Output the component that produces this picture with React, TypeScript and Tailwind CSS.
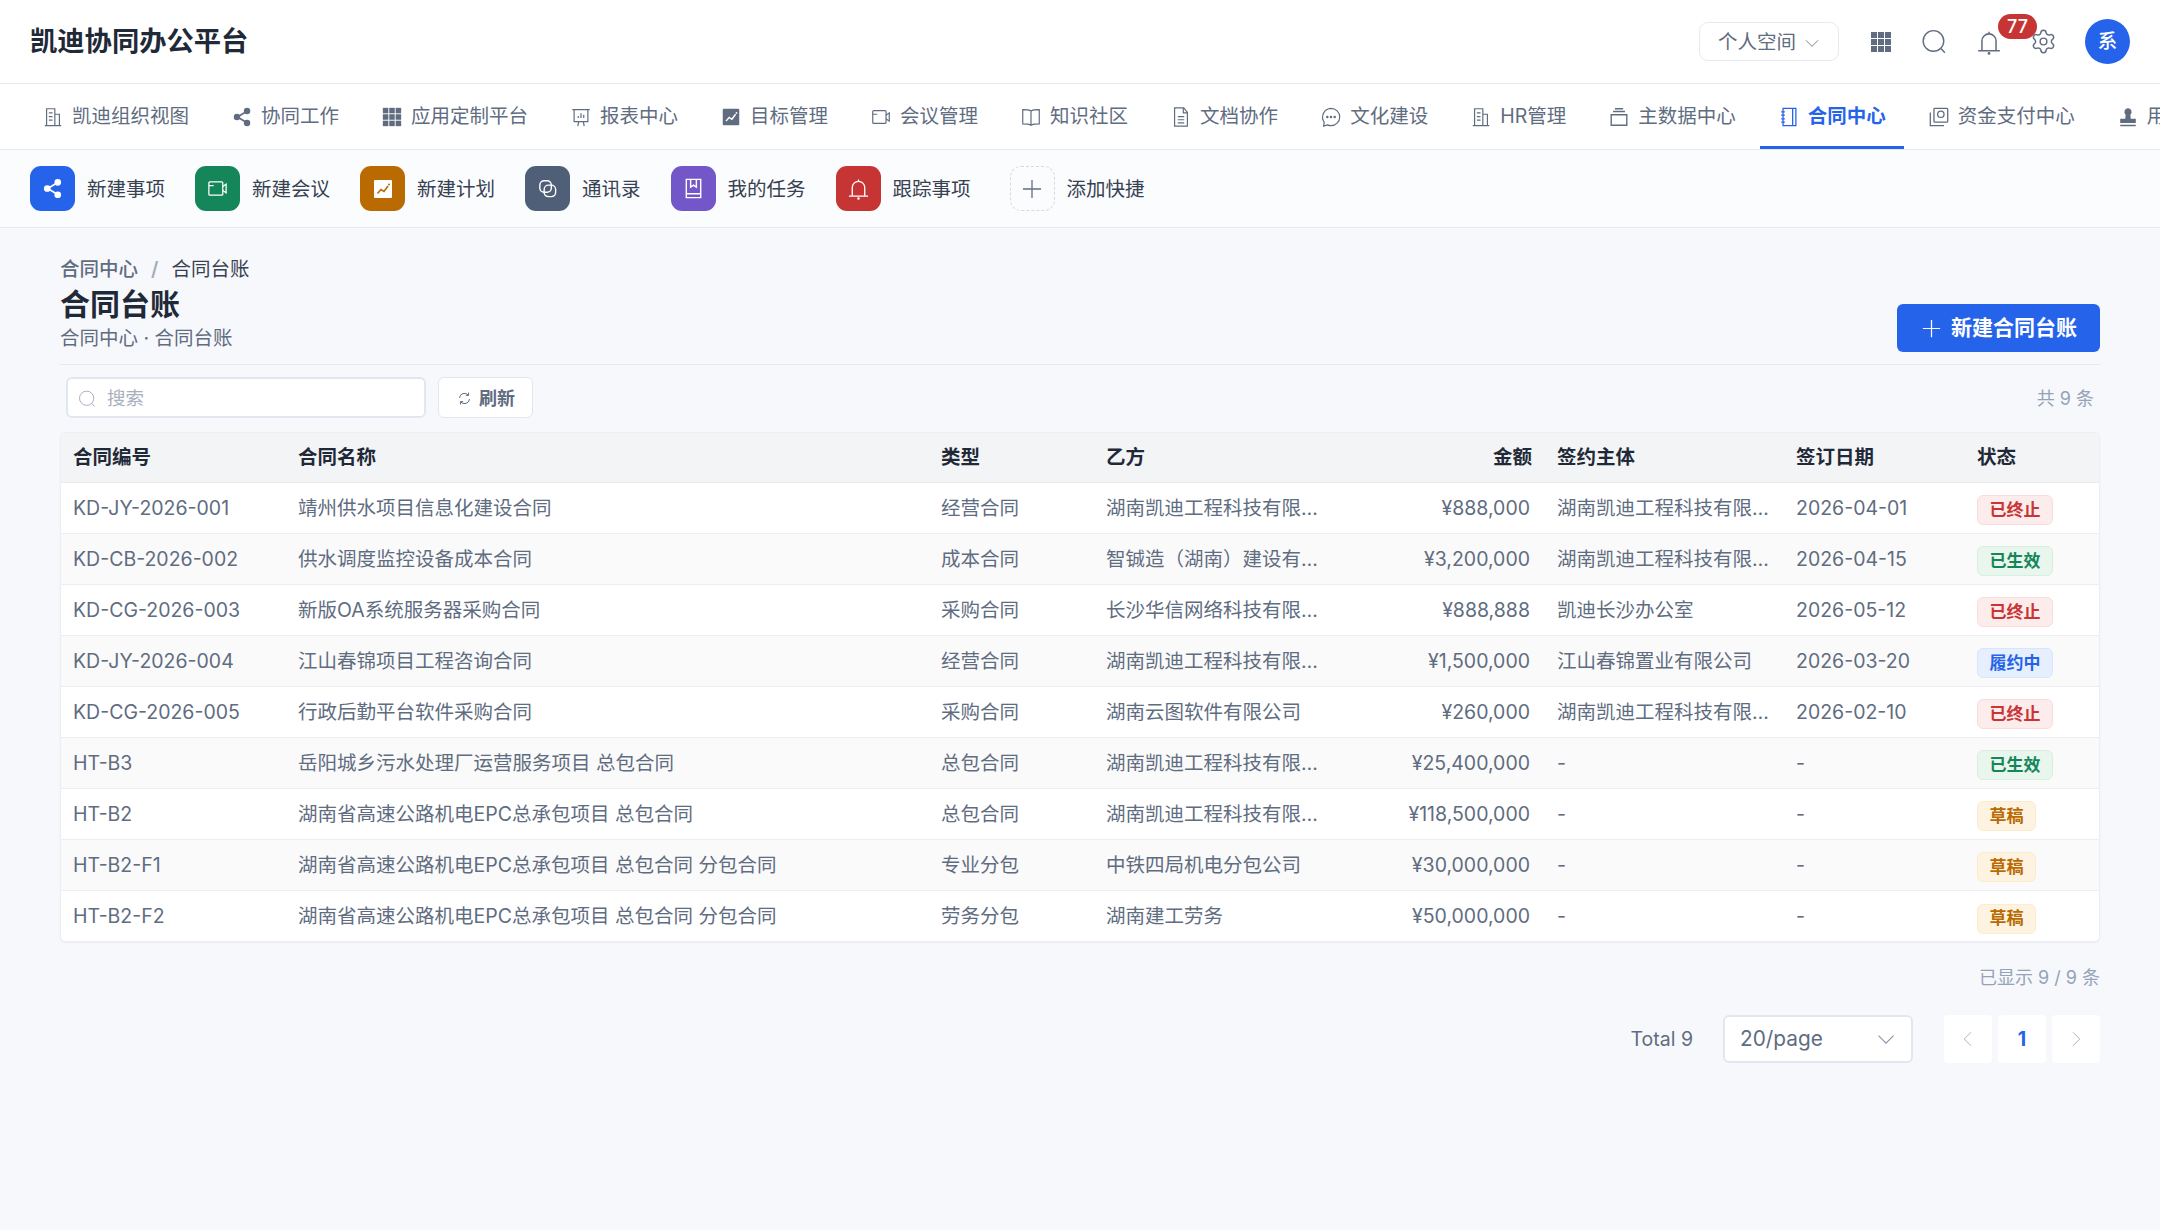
import React from 'react'
import { Settings } from 'lucide-react'

const Svg: React.FC<{ className?: string; sw?: number; children: React.ReactNode }> = ({ className, sw = 1.3, children }) => (
  <svg viewBox="0 0 24 24" fill="none" stroke="currentColor" strokeWidth={sw} className={className}>
    {children}
  </svg>
)

const icons: Record<string, (c: string, inner?: string) => React.ReactNode> = {
  building: (c) => <Svg className={c}><path d="M3 21.5h18M5 21.5V3h9v18.5M14 9h5v12.5M7.500 7.500h4M7.500 11.500h4M7.500 15.500h4" /></Svg>,
  share: (c) => <Svg className={c} sw={1.8}><path d="M17 6 7 12l10 6" /><circle cx="17.500" cy="5.500" r="2.600" fill="currentColor" /><circle cx="6.500" cy="12" r="2.600" fill="currentColor" /><circle cx="17.500" cy="18.500" r="2.600" fill="currentColor" /></Svg>,
  grid: (c) => (
    <svg viewBox="0 0 24 24" fill="currentColor" className={c}>
      <rect x="2" y="2" width="6" height="6" /><rect x="9" y="2" width="6" height="6" /><rect x="16" y="2" width="6" height="6" />
      <rect x="2" y="9" width="6" height="6" /><rect x="9" y="9" width="6" height="6" /><rect x="16" y="9" width="6" height="6" />
      <rect x="2" y="16" width="6" height="6" /><rect x="9" y="16" width="6" height="6" /><rect x="16" y="16" width="6" height="6" />
    </svg>
  ),
  board: (c) => <Svg className={c}><path d="M2.500 4h19M4.500 4v13h15V4M9.500 17l-1 5M14.500 17l1 5M9 13v-2M12 13V8M15 13v-3.500" /></Svg>,
  trend: (c, inner = '#ffffff') => (
    <svg viewBox="0 0 24 24" className={c}>
      <rect x="3" y="3" width="18" height="18" rx="1" fill="currentColor" />
      <path d="M6.500 16.500 10 12.500l3 2 4-5.500" fill="none" stroke={inner} strokeWidth="1.6" />
      <circle cx="18" cy="7.500" r="1" fill={inner} />
    </svg>
  ),
  video: (c) => <Svg className={c}><rect x="3" y="5" width="14.500" height="14" rx="1" /><path d="M3 9h5M17.500 10 21 7.500v9L17.500 14" /></Svg>,
  book: (c) => <Svg className={c}><path d="M12 5.500C10 4.200 6 4 3 4v15.500c3 0 7 .2 9 1.500 2-1.300 6-1.500 9-1.500V4c-3 0-7 .2-9 1.500zM12 5.500V21" /></Svg>,
  doc: (c) => <Svg className={c}><path d="M5 2h10l4 5v15H5zM14.500 2v5.500H19M8.500 11.500h7M8.500 15h7M8.500 18.500h7" /></Svg>,
  chat: (c) => (
    <Svg className={c}>
      <path d="M12 2.500a9.500 9.500 0 0 1 0 19c-1.500 0-2.800-.3-4-.9L4 22l.6-4.500A9.500 9.500 0 0 1 12 2.500z" />
      <circle cx="8" cy="12" r=".7" fill="currentColor" /><circle cx="12" cy="12" r=".7" fill="currentColor" /><circle cx="16" cy="12" r=".7" fill="currentColor" />
    </Svg>
  ),
  box: (c) => <Svg className={c} sw={1.5}><path d="M3.500 9.500h17V21h-17zM5.500 6h13M7.500 3h9" /></Svg>,
  notebook: (c) => <Svg className={c} sw={1.4}><path d="M5.500 2.500h14v19h-14zM16 2.500v19M3.500 6.500h4M3.500 10h4M3.500 14h4M3.500 17.500h4" /></Svg>,
  postcard: (c) => <Svg className={c} sw={1.4}><rect x="6.500" y="2.500" width="15" height="15" rx="1" /><circle cx="14" cy="9" r="3.500" /><path d="M2.500 7v14.500h15" /></Svg>,
  stamp: (c) => (
    <svg viewBox="0 0 24 24" fill="currentColor" className={c}>
      <path d="M12 2.500a4 4 0 0 1 2.600 7L15 14h5.500v4.500h-17V14H9l.4-4.500a4 4 0 0 1 2.600-7zM3.500 20.500h17V22h-17z" />
    </svg>
  ),
  search: (c) => <Svg className={c} sw={1.3}><circle cx="11.500" cy="11" r="9.500" /><path d="m18.500 18 3.500 4" /></Svg>,
  bell: (c) => <Svg className={c} sw={1.4}><path d="M2 20h20M5.500 20v-9a6.500 6.500 0 0 1 13 0v9M12 2.500v2" /><circle cx="12" cy="22.500" r=".6" fill="currentColor" /></Svg>,
  copy: (c) => <Svg className={c} sw={1.5}><rect x="4" y="4" width="12" height="12" rx="4.500" /><rect x="8.500" y="8.500" width="12" height="12" rx="4.500" /></Svg>,
  task: (c) => <Svg className={c} sw={1.5}><path d="M4.500 2.500h15v19h-15zM4.500 17.500h15M9 2.500v8l3-2 3 2v-8" /></Svg>,
  plus: (c) => <Svg className={c} sw={1.3}><path d="M12 3v18M3 12h18" /></Svg>,
  down: (c) => <Svg className={c} sw={1.3}><path d="m3 8 9 9 9-9" /></Svg>,
  left: (c) => <Svg className={c} sw={1.2}><path d="m16 3-9 9 9 9" /></Svg>,
  right: (c) => <Svg className={c} sw={1.2}><path d="m8 3 9 9-9 9" /></Svg>,
  refresh: (c) => <Svg className={c} sw={1.6}><path d="M4 11a8 8 0 0 1 14-4.500M20 13a8 8 0 0 1-14 4.500" /><path d="M18.500 2.500v4.500H14M5.500 21.500V17H10" /></Svg>,
}

const navItems = [
  { label: '凯迪组织视图', icon: 'building' },
  { label: '协同工作', icon: 'share' },
  { label: '应用定制平台', icon: 'grid' },
  { label: '报表中心', icon: 'board' },
  { label: '目标管理', icon: 'trend' },
  { label: '会议管理', icon: 'video' },
  { label: '知识社区', icon: 'book' },
  { label: '文档协作', icon: 'doc' },
  { label: '文化建设', icon: 'chat' },
  { label: 'HR管理', icon: 'building' },
  { label: '主数据中心', icon: 'box' },
  { label: '合同中心', icon: 'notebook', active: true },
  { label: '资金支付中心', icon: 'postcard' },
  { label: '用户中心', icon: 'stamp' },
]

const shortcuts = [
  { label: '新建事项', icon: 'share', bg: 'bg-[#2563eb]' },
  { label: '新建会议', icon: 'video', bg: 'bg-[#15865a]' },
  { label: '新建计划', icon: 'trend', bg: 'bg-[#b96a00]' },
  { label: '通讯录', icon: 'copy', bg: 'bg-[#4f5f78]' },
  { label: '我的任务', icon: 'task', bg: 'bg-[#7356c8]' },
  { label: '跟踪事项', icon: 'bell', bg: 'bg-[#c73434]' },
]

const CO = '湖南凯迪工程科技有限公司'

const rows = [
  ['KD-JY-2026-001', '靖州供水项目信息化建设合同', '经营合同', CO, '¥888,000', CO, '2026-04-01', '已终止'],
  ['KD-CB-2026-002', '供水调度监控设备成本合同', '成本合同', '智铖造（湖南）建设有限公司', '¥3,200,000', CO, '2026-04-15', '已生效'],
  ['KD-CG-2026-003', '新版OA系统服务器采购合同', '采购合同', '长沙华信网络科技有限公司', '¥888,888', '凯迪长沙办公室', '2026-05-12', '已终止'],
  ['KD-JY-2026-004', '江山春锦项目工程咨询合同', '经营合同', CO, '¥1,500,000', '江山春锦置业有限公司', '2026-03-20', '履约中'],
  ['KD-CG-2026-005', '行政后勤平台软件采购合同', '采购合同', '湖南云图软件有限公司', '¥260,000', CO, '2026-02-10', '已终止'],
  ['HT-B3', '岳阳城乡污水处理厂运营服务项目 总包合同', '总包合同', CO, '¥25,400,000', '-', '-', '已生效'],
  ['HT-B2', '湖南省高速公路机电EPC总承包项目 总包合同', '总包合同', CO, '¥118,500,000', '-', '-', '草稿'],
  ['HT-B2-F1', '湖南省高速公路机电EPC总承包项目 总包合同 分包合同', '专业分包', '中铁四局机电分包公司', '¥30,000,000', '-', '-', '草稿'],
  ['HT-B2-F2', '湖南省高速公路机电EPC总承包项目 总包合同 分包合同', '劳务分包', '湖南建工劳务', '¥50,000,000', '-', '-', '草稿'],
]

const badgeStyles: Record<string, string> = {
  已终止: 'bg-[#fdecec] border-[#fbdcdc] text-[#c93434]',
  已生效: 'bg-[#e8f6ee] border-[#d7efe1] text-[#15865a]',
  履约中: 'bg-[#e6effe] border-[#d8e5fd] text-[#2563eb]',
  草稿: 'bg-[#fdf3e0] border-[#fbebcf] text-[#b96a00]',
}

const Badge: React.FC<{ text: string }> = ({ text }) => (
  <span className={`inline-flex h-[30px] items-center rounded-[6px] border px-[11.5px] text-[17px] font-semibold ${badgeStyles[text]}`}>
    {text}
  </span>
)

const Header: React.FC = () => (
  <header className="flex h-[84px] items-center justify-between border-b border-[#e8eaee] bg-white pl-[30px] pr-[30px]">
    <h1 className="pt-[2px] text-[27.3px] font-semibold text-[#1f2937]">凯迪协同办公平台</h1>
    <div className="flex items-center">
      <button className="flex h-[39px] w-[140px] items-center justify-center gap-[8px] rounded-[9px] border border-[#e8eaf0] pt-[2px] text-[19.5px] text-[#606c80]">
        个人空间
        {icons.down('h-[16px] w-[16px]')}
      </button>
      <div className="ml-[30px] flex items-center text-[#606c80]">
        {icons.grid('h-[24px] w-[24px]')}
        {icons.search('ml-[28px] h-[26px] w-[26px]')}
        <div className="relative ml-[29px]">
          {icons.bell('h-[26px] w-[26px]')}
          <span className="absolute left-[22px] top-[-15px] z-10 flex h-[25px] w-[39px] items-center justify-center rounded-full bg-[#c73434] text-[18px] font-medium text-white">77</span>
        </div>
        <Settings className="ml-[28px] h-[27px] w-[27px]" strokeWidth={1.3} />
      </div>
      <div className="ml-[28px] flex h-[45px] w-[45px] items-center justify-center rounded-full bg-[#2563eb] text-[19.5px] font-medium text-white">系</div>
    </div>
  </header>
)

const Nav: React.FC = () => (
  <nav className="flex h-[66px] items-stretch gap-[6px] overflow-hidden border-b border-[#e8eaee] bg-white pl-[24px]">
    {navItems.map((n) => (
      <a
        key={n.label}
        className={
          n.active
            ? 'flex shrink-0 items-center gap-[8px] border-b-[3px] border-[#2563eb] px-[18px] pt-[3px] text-[19.5px] font-semibold text-[#2563eb]'
            : 'flex shrink-0 items-center gap-[8px] border-b-[3px] border-transparent px-[18px] pt-[3px] text-[19.5px] text-[#606c80]'
        }
      >
        {icons[n.icon]('h-[22px] w-[22px] shrink-0')}
        {n.label}
      </a>
    ))}
  </nav>
)

const Shortcuts: React.FC = () => (
  <div className="flex h-[78px] items-center gap-[30px] border-b border-[#e8eaee] bg-[#fbfcfe] pl-[30px]">
    {shortcuts.map((s) => (
      <div key={s.label} className="flex items-center gap-[12px]">
        <div className={`flex h-[45px] w-[45px] items-center justify-center rounded-[11px] text-white ${s.bg}`}>
          {s.icon === 'trend'
            ? icons.trend('h-[24px] w-[24px]', '#b96a00')
            : icons[s.icon]('h-[23px] w-[23px]')}
        </div>
        <span className="pt-[2px] text-[19.5px] text-[#374151]">{s.label}</span>
      </div>
    ))}
    <div className="ml-[9px] flex items-center gap-[12px]">
      <div className="flex h-[45px] w-[45px] items-center justify-center rounded-[11px] border border-dashed border-[#d5d9e2] text-[#606c80]">
        {icons.plus('h-[24px] w-[24px]')}
      </div>
      <span className="pt-[2px] text-[19.5px] text-[#374151]">添加快捷</span>
    </div>
  </div>
)

const columns = [
  { title: '合同编号', cls: 'w-[225px] pr-[12px] text-left' },
  { title: '合同名称', cls: 'w-[643px] pr-[12px] text-left' },
  { title: '类型', cls: 'w-[165px] pr-[12px] text-left' },
  { title: '乙方', cls: 'w-[238px] pr-[12px] text-left' },
  { title: '金额', cls: 'w-[213px] pr-[13px] text-right' },
  { title: '签约主体', cls: 'w-[239px] pr-[12px] text-left' },
  { title: '签订日期', cls: 'w-[181px] pr-[12px] text-left' },
  { title: '状态', cls: 'pr-[12px] text-left' },
]

const ContractTable: React.FC = () => (
  <div className="mt-[14px] overflow-hidden rounded-[6px] border border-[#eceef3] bg-white shadow-[0_1px_2px_rgba(30,41,59,0.06)]">
    <table className="w-full table-fixed border-collapse text-[19.5px] text-[#606c80]">
      <thead>
        <tr className="h-[49px] border-b border-[#e8eaee] bg-[#f3f4f6]">
          {columns.map((c) => (
            <th key={c.title} className={`pl-[12px] font-semibold text-[#1f2937] ${c.cls}`}>{c.title}</th>
          ))}
        </tr>
      </thead>
      <tbody>
        {rows.map((r, i) => (
          <tr key={r[0]} className={`h-[51px] border-b border-[#eceef1] last:border-b-0 ${i % 2 === 1 ? 'bg-[#fafafa]' : 'bg-white'}`}>
            <td className="truncate px-[12px] pt-[2px]">{r[0]}</td>
            <td className="truncate px-[12px] pt-[2px]">{r[1]}</td>
            <td className="truncate px-[12px] pt-[2px]">{r[2]}</td>
            <td className="truncate px-[12px] pt-[2px]">{r[3]}</td>
            <td className="truncate pl-[12px] pr-[15px] pt-[2px] text-right">{r[4]}</td>
            <td className="truncate px-[12px] pt-[2px]">{r[5]}</td>
            <td className="truncate px-[12px] pt-[2px]">{r[6]}</td>
            <td className="px-[12px] pt-[5px]"><Badge text={r[7]} /></td>
          </tr>
        ))}
      </tbody>
    </table>
  </div>
)

const Pagination: React.FC = () => (
  <div className="mt-[24px] flex items-center justify-end">
    <span className="pt-[2px] text-[19.5px] text-[#606c80]">Total 9</span>
    <div className="ml-[30px] flex h-[48px] w-[190px] items-center justify-between rounded-[6px] border-2 border-[#e2e6ee] bg-white pl-[15px] pr-[15px] text-[20.8px] text-[#606c80]">
      20/page
      {icons.down('h-[20px] w-[20px] text-[#8794a8]')}
    </div>
    <div className="ml-[31px] flex gap-[6px]">
      <div className="flex h-[48px] w-[48px] items-center justify-center rounded-[4px] bg-white text-[#a3adbd]">{icons.left('h-[18px] w-[18px]')}</div>
      <div className="flex h-[48px] w-[48px] items-center justify-center rounded-[4px] bg-white pt-[2px] text-[19.5px] font-bold text-[#2563eb]">1</div>
      <div className="flex h-[48px] w-[48px] items-center justify-center rounded-[4px] bg-white text-[#a3adbd]">{icons.right('h-[18px] w-[18px]')}</div>
    </div>
  </div>
)

const App: React.FC = () => (
  <div className="min-h-[1230px] bg-[#f7f8fc] font-['Inter','Noto_Sans_CJK_SC',sans-serif]">
    <Header />
    <Nav />
    <Shortcuts />
    <main className="px-[60px] pt-[27px]">
      <div className="flex items-end justify-between border-b border-[#e8eaf0] pb-[12px]">
        <div>
          <div className="flex h-[27px] items-center pt-[2px] text-[19.5px] leading-[27px]">
            <span className="font-medium text-[#606c80]">合同中心</span>
            <span className="mx-[13px] font-semibold text-[#a3adbd]">/</span>
            <span className="text-[#374151]">合同台账</span>
          </div>
          <h2 className="mt-[4px] text-[30px] font-bold leading-[36px] text-[#1f2937]">合同台账</h2>
          <p className="mt-[2px] text-[19.5px] leading-[28px] text-[#606c80]">合同中心 · 合同台账</p>
        </div>
        <button className="flex h-[48px] w-[203px] items-center justify-center gap-[8px] rounded-[6px] bg-[#2563eb] text-[21px] font-semibold text-white">
          {icons.plus('h-[23px] w-[23px]')}
          新建合同台账
        </button>
      </div>
      <div className="mt-[12px] flex items-center justify-between pl-[6px] pr-[6px]">
        <div className="flex items-center gap-[12px]">
          <div className="flex h-[41px] w-[360px] items-center gap-[11px] rounded-[6px] border-2 border-[#e2e6ee] bg-white pl-[10px] pt-[2px] text-[18.5px] text-[#a8b0bd]">
            {icons.search('h-[18px] w-[18px]')}
            搜索
          </div>
          <button className="flex h-[41px] w-[95px] items-center gap-[7px] rounded-[6px] border border-[#e2e6ee] bg-white pl-[18px] pt-[1px] text-[18px] font-semibold text-[#606c80]">
            {icons.refresh('h-[15px] w-[15px]')}
            刷新
          </button>
        </div>
        <span className="pt-[2px] text-[18px] text-[#94a3b8]">共 9 条</span>
      </div>
      <ContractTable />
      <div className="mt-[23px] text-right text-[18px] leading-[26px] text-[#94a3b8]">已显示 9 / 9 条</div>
    </main>
    <div className="px-[60px]">
      <Pagination />
    </div>
  </div>
)

export default App
